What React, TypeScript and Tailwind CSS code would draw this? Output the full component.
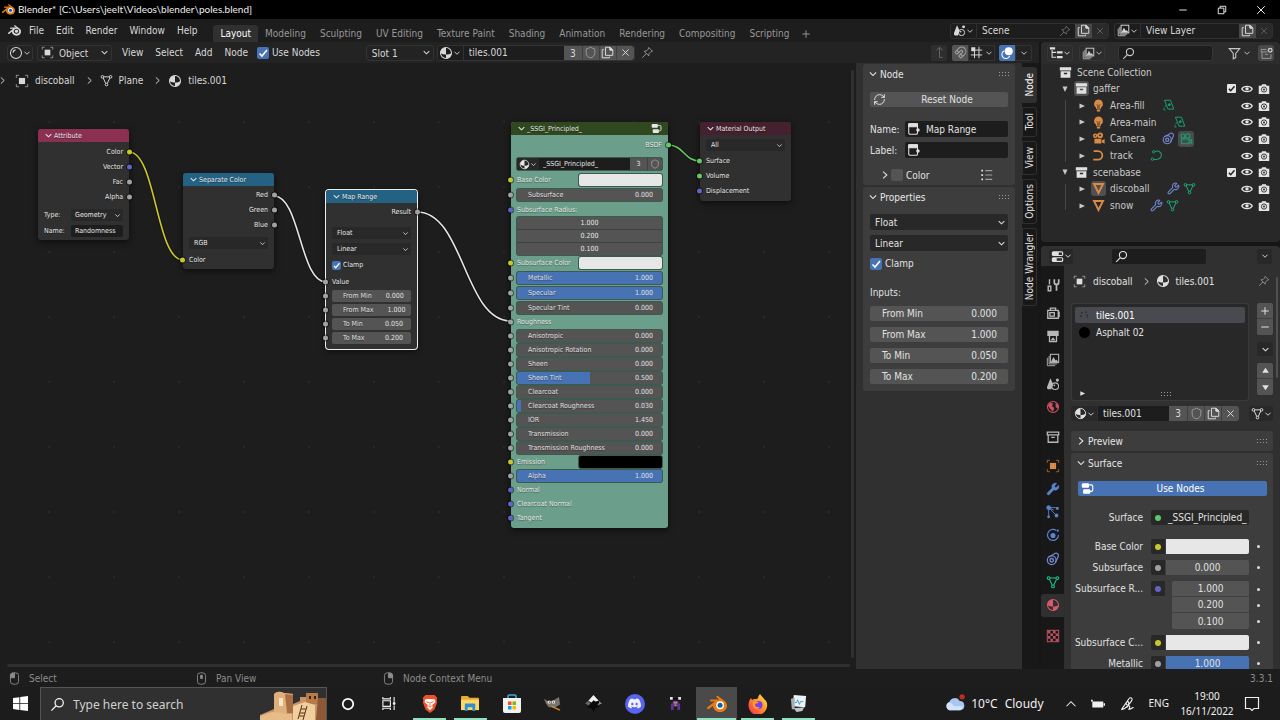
import React from "react";
import { Shield, Wrench, RefreshCw, Magnet } from "lucide-react";
import { SiBlender, SiDiscord } from "react-icons/si";

type Kids = { children?: React.ReactNode; className?: string };

const Icon = ({ children, className = "size-[14px]" }: Kids) => (
  <svg viewBox="0 0 16 16" className={"shrink-0 " + className} fill="none" stroke="currentColor" strokeWidth="1.2" aria-hidden="true">
    {children}
  </svg>
);

const ChevronDown = ({ className = "size-[10px]" }: Kids) => (
  <Icon className={className}><path d="M3 5.5 8 10.5 13 5.5" strokeWidth="1.8" /></Icon>
);
const ChevronRight = ({ className = "size-[11px]" }: Kids) => (
  <Icon className={className}><path d="M5 2.5 11 8 5 13.5" strokeWidth="1.7" /></Icon>
);
const ObjectIcon = ({ className }: Kids) => (
  <Icon className={className}>
    <rect x="4.5" y="4.5" width="7" height="7" fill="currentColor" stroke="none" />
    <path d="M1.5 4.5v-3h3M11.500 1.500h3v3M14.500 11.500v3h-3M4.500 14.500h-3v-3" strokeWidth="1" opacity=".7" />
  </Icon>
);
const MeshIcon = ({ className }: Kids) => (
  <Icon className={className}>
    <path d="M4.500 3.500h7M4 5 7 11.500M12 5 9 11.500" />
    <circle cx="3" cy="3.500" r="1.600" /><circle cx="13" cy="3.500" r="1.600" /><circle cx="8" cy="13" r="1.600" />
  </Icon>
);
const MaterialIcon = ({ className }: Kids) => (
  <Icon className={className}>
    <circle cx="8" cy="8" r="6.300" />
    <path d="M8 1.700A6.300 6.300 0 0 0 1.700 8C3.500 9.300 5.500 9.800 8 9.800ZM8 9.800C10.500 9.800 12.500 9.300 14.300 8A6.300 6.300 0 0 1 8 14.300Z" fill="currentColor" stroke="none" />
  </Icon>
);
const PinIcon = ({ className }: Kids) => (
  <Icon className={className}>
    <path d="M9.500 1.800 14.200 6.500 12.300 7 9.800 9.500 9.600 12.200 3.800 6.400 6.500 6.200 9 3.700ZM6.700 9.300 1.500 14.500" strokeWidth="1.100" />
  </Icon>
);
const CopyIcon = ({ className }: Kids) => (
  <Icon className={className}>
    <path d="M5.500 1.500h5.500l3.500 3.500v6.500h-9ZM11 1.500v3.500h3.500" />
    <path d="M11 1.500 14.500 5H11Z" fill="currentColor" />
    <path d="M3.500 4.500h-2v10h9v-1.500" />
  </Icon>
);
const CloseIcon = ({ className }: Kids) => (
  <Icon className={className}><path d="M3.500 3.500l9 9M12.500 3.500l-9 9" strokeWidth="1.400" /></Icon>
);
const SearchIcon = ({ className }: Kids) => (
  <Icon className={className}><circle cx="9.800" cy="6.200" r="4.400" strokeWidth="1.400" /><path d="M6.600 9.400 1.500 14.500" strokeWidth="1.400" /></Icon>
);
const NodeTreeIcon = ({ className }: Kids) => (
  <Icon className={className}>
    <rect x="1" y="1.500" width="9" height="5.500" rx="1.500" fill="currentColor" stroke="none" />
    <rect x="2.500" y="9" width="9" height="5.500" rx="1.500" fill="currentColor" stroke="none" />
    <path d="M10 3.500h2.500q2 0 2 2v4q0 2-2 2H11" strokeWidth="1.400" />
  </Icon>
);
const NodeIcon = ({ className }: Kids) => (
  <Icon className={className}>
    <rect x="2" y="2" width="10" height="12" rx="1.500" />
    <path d="M2 2h10v3.500H2Z" fill="currentColor" /><circle cx="12.500" cy="9" r="2" fill="currentColor" stroke="none" />
  </Icon>
);
const CollectionIcon = ({ className }: Kids) => (
  <Icon className={className}>
    <path d="M1 1.500h14v4H1Z" fill="currentColor" stroke="none" />
    <path d="M2 6.500h12V14.500H2ZM6 8.300h4v1.900H6Z" fill="currentColor" fillRule="evenodd" stroke="none" />
  </Icon>
);
const CollectionOutline = ({ className }: Kids) => (
  <Icon className={className}><path d="M1.500 2.500h13v3h-13ZM2.500 5.500h11v8.500h-11ZM6 8.500h4" strokeWidth="1.500" /></Icon>
);
const SceneIcon = ({ className }: Kids) => (
  <Icon className={className}>
    <path d="M5 1.500 8.200 8.500 6 14H2.500C1 14 1 12 1.500 10.500Z" fill="currentColor" stroke="none" />
    <circle cx="10.500" cy="10.500" r="3.800" /><circle cx="13" cy="3.500" r="1.800" fill="currentColor" stroke="none" />
    <circle cx="9.500" cy="9.500" r="1" fill="currentColor" stroke="none" />
  </Icon>
);
const LayersIcon = ({ className }: Kids) => (
  <Icon className={className}>
    <rect x="5" y="1.500" width="9.500" height="9.500" />
    <path d="M5.500 10.500 8.500 4.500 11 8.500 12 7.500 14 10.500Z" fill="currentColor" stroke="none" />
    <path d="M3.500 3.500v9h9M1.500 5.500v9h9" strokeWidth="1" />
  </Icon>
);
const FilterIcon = ({ className }: Kids) => (
  <Icon className={className}><path d="M1.500 2h13L9.500 8v5L6.500 14.500V8Z" strokeWidth="1.300" /></Icon>
);
const LightIcon = ({ className }: Kids) => (
  <Icon className={className}>
    <path d="M8 .5a5.500 5.500 0 0 0-3.300 9.800L5.500 12.500h5l.8-2.200A5.500 5.500 0 0 0 8 .5ZM6 13.200h4V15.500H6Z" fill="currentColor" stroke="none" />
    <path d="M6 6.500 7.200 8v4M10 6.500 8.800 8v4" stroke="#282828" strokeWidth=".9" />
  </Icon>
);
const CameraObjIcon = ({ className }: Kids) => (
  <Icon className={className}>
    <circle cx="4" cy="4.500" r="2.800" fill="currentColor" stroke="none" /><circle cx="10" cy="4" r="3.500" fill="currentColor" stroke="none" />
    <circle cx="10" cy="4" r="1.200" fill="#282828" stroke="none" /><circle cx="4" cy="4.500" r=".9" fill="#282828" stroke="none" />
    <path d="M3 8.300h8.500v6H3ZM12.200 10.500l3.300-2v6l-3.300-2Z" fill="currentColor" stroke="none" />
  </Icon>
);
const CameraDataIcon = ({ className }: Kids) => (
  <Icon className={className}>
    <circle cx="4.500" cy="4.500" r="2.300" /><circle cx="10" cy="4.500" r="2.600" />
    <path d="M3 8h8.500v5.500H3ZM11.500 10l3-1.500v4.500l-3-1.500" />
  </Icon>
);
const CurveObjIcon = ({ className }: Kids) => (
  <Icon className={className}><path d="M2 2.500h5.500a5 5 0 0 1 0 10.500H1.500" strokeWidth="2.200" /></Icon>
);
const CurveDataIcon = ({ className }: Kids) => (
  <Icon className={className}>
    <path d="M6 3C10 1.500 14.500 4 14 8s-4 5.500-9.500 4.500" strokeWidth="1.300" /><circle cx="4.500" cy="3.500" r="1.500" /><circle cx="3" cy="12.500" r="1.500" />
  </Icon>
);
const LampDataIcon = ({ className }: Kids) => (
  <Icon className={className}>
    <path d="M3 1.500h7.500l4 11H7.500Z" /><circle cx="9" cy="7" r="1.200" fill="currentColor" /><path d="M4.500 8 1.500 13.500h4" strokeDasharray="2 1.500" />
  </Icon>
);
const MeshObjIcon = ({ className }: Kids) => (
  <Icon className={className}><path d="M2.500 2.500h11L8 13.500Z" strokeWidth="2.400" /></Icon>
);
const ConstraintIcon = ({ className }: Kids) => (
  <Icon className={className}>
    <circle cx="6.500" cy="9.500" r="5" strokeWidth="1.400" /><circle cx="6.500" cy="9.500" r="2" strokeWidth="1.600" /><path d="M3 6 10.500 1.500C13 .8 15 3 14 5L10.500 12.500" strokeWidth="1.400" />
  </Icon>
);
const EyeIcon = ({ className }: Kids) => (
  <Icon className={className}>
    <path d="M1 8C3.500 3.500 12.500 3.500 15 8 12.500 12.500 3.500 12.500 1 8Z" strokeWidth="1.700" /><circle cx="8" cy="7.800" r="2.300" fill="currentColor" stroke="none" />
  </Icon>
);
const RenderIcon = ({ className }: Kids) => (
  <Icon className={className}>
    <path d="M1 3.500h3.500l1-2h5l1 2H15v11H1Z" fill="currentColor" stroke="none" /><circle cx="8" cy="8.700" r="3.500" stroke="#282828" strokeWidth="1.200" /><circle cx="8" cy="8.700" r="1.300" fill="#282828" stroke="none" />
  </Icon>
);
const ToolIcon = ({ className }: Kids) => (
  <Icon className={className}>
    <path d="M4 1.500v6M2.500 9.500h3v5h-3Z" strokeWidth="1.600" /><path d="M12 14.500V8M9.500 1.500v3.500c0 3 5 3 5 0V1.500" strokeWidth="2" />
  </Icon>
);
const CameraBack = ({ className }: Kids) => (
  <Icon className={className}><path d="M2 5h12v9H2ZM5 5V2.500h6V5M4.500 7.500h5v4h-5ZM14 7h1v5h-1" strokeWidth="1.500" /></Icon>
);
const PrinterIcon = ({ className }: Kids) => (
  <Icon className={className}><path d="M1.500 2h13v6h-13Z" fill="currentColor" stroke="none" /><path d="M4 7.500v7h8v-7" strokeWidth="1.500" /><path d="M5 13 8 9.500 11 13Z" fill="currentColor" stroke="none" /></Icon>
);
const WorldIcon = ({ className }: Kids) => (
  <Icon className={className}><circle cx="8" cy="8" r="6.300" strokeWidth="1.300" /><path d="M2 6 5 3 8 4 7 7 9.500 9 8 13.500 4.500 10ZM11 3 14 6 13.500 10 11 8Z" fill="currentColor" stroke="none" /></Icon>
);
const ParticleIcon = ({ className }: Kids) => (
  <Icon className={className}><path d="M3 3V14M3 3h11M3 3l9 9M3 3l6 3" strokeWidth="1" /><circle cx="3" cy="3" r="2" fill="currentColor" /><circle cx="12" cy="12" r="1.600" fill="currentColor" /><circle cx="13" cy="4" r="1" fill="currentColor" /><circle cx="3" cy="13.500" r="1" fill="currentColor" /></Icon>
);
const PhysicsIcon = ({ className }: Kids) => (
  <Icon className={className}><path d="M12 3A6.300 6.300 0 1 0 14.300 8" strokeWidth="1.300" /><circle cx="8" cy="8.500" r="2.900" fill="currentColor" stroke="none" /><circle cx="13.500" cy="3" r="1.200" fill="currentColor" stroke="none" /></Icon>
);
const TextureIcon = ({ className }: Kids) => (
  <Icon className={className}>
    <rect x="1.500" y="1.500" width="13" height="13" />
    <path d="M2 2h3v3H2ZM8 2h3v3H8ZM5 5h3v3H5ZM11 5h3v3h-3ZM2 8h3v3H2ZM8 8h3v3H8ZM5 11h3v3H5ZM11 11h3v3h-3Z" fill="currentColor" stroke="none" />
  </Icon>
);
const PropsIcon = ({ className }: Kids) => (
  <Icon className={className}>
    <rect x="1" y="1.500" width="14" height="6" rx="2" fill="currentColor" stroke="none" /><rect x="1" y="8.800" width="14" height="6" rx="2" fill="currentColor" stroke="none" />
    <path d="M9.500 3h4v3h-4ZM7 10.300h6.500v3H7Z" fill="#282828" stroke="none" />
  </Icon>
);
const TreeIcon = ({ className }: Kids) => (
  <Icon className={className}>
    <path d="M1 1.500h6V4H1ZM9 6h6.500v2.500H9ZM9 11.500h6.500V14H9Z" fill="currentColor" stroke="none" /><path d="M3.500 4.500v8.300H8M3.500 7.300H8" />
  </Icon>
);
const MouseIcon = ({ button }: { button: "left" | "middle" | "right" }) => (
  <Icon className="size-[13px]">
    <rect x="3" y="1" width="10" height="14" rx="3.500" strokeWidth="1.100" />
    {button === "left" && <path d="M3 7V3.500L5 1.500H8V7Z" fill="currentColor" />}
    {button === "right" && <path d="M13 7V3.500L11 1.500H8V7Z" fill="currentColor" />}
    {button === "middle" && <path d="M7 4h2v4H7Z" fill="currentColor" />}
  </Icon>
);
const Grip = () => (
  <svg viewBox="0 0 10 4" className="h-[4px] w-[10px] shrink-0 text-[#9a9a9a]" fill="currentColor" aria-hidden="true">
    {[0, 3, 6, 9].map((x) => <React.Fragment key={x}><rect x={x} y="0" width="1" height="1" /><rect x={x} y="3" width="1" height="1" /></React.Fragment>)}
  </svg>
);

function ColorBlender({ className }: Kids) {
  return (
    <span className={"relative block shrink-0 " + className}>
      <SiBlender className="size-full text-[#ea7c14]" />
      <svg viewBox="0 0 24 24" className="absolute inset-0 size-full" aria-hidden="true">
        <circle cx="15.700" cy="13.400" r="4.800" fill="#fff" /><circle cx="15.700" cy="13.400" r="3" fill="#1d5b96" />
      </svg>
    </span>
  );
}

/* ---------- shared controls ---------- */

function Select({ label, value, className, chevron = "size-[9px]" }: { label: string; value: string; className: string; chevron?: string }) {
  return (
    <span className={"relative flex items-center " + className}>
      <select aria-label={label} defaultValue={value} className="h-full w-full appearance-none bg-transparent outline-none">
        <option>{value}</option>
      </select>
      <ChevronDown className={"pointer-events-none absolute right-[2px] " + chevron} />
    </span>
  );
}

function Check({ label, checked, size = "size-[12px]", gap = "gap-[3px]" }: { label: string; checked?: boolean; size?: string; gap?: string }) {
  return (
    <label className={"flex items-center " + gap}>
      <span className={"relative block shrink-0 " + size}>
        <input type="checkbox" defaultChecked={checked} className="peer block size-full appearance-none rounded-[2px] bg-[#545454] checked:bg-[#4772b3]" />
        <svg viewBox="0 0 12 12" className="pointer-events-none absolute inset-0 hidden size-full peer-checked:block" fill="none" stroke="#fff" strokeWidth="1.600" aria-hidden="true">
          <path d="M2.500 6.500 5 9 10 3" />
        </svg>
      </span>
      {label}
    </label>
  );
}

function NumberField({ label, value, fill = 0, className }: { label: string; value: string; fill?: number; className: string }) {
  return (
    <label className={"relative flex items-center overflow-hidden bg-[#545454] text-[#e0e0e0] " + className}>
      {fill > 0 && <span className="absolute inset-y-0 left-0 bg-[#4772b3]" style={{ width: `${fill * 100}%` }} />}
      <span className="relative flex-1 whitespace-nowrap">{label}</span>
      <input defaultValue={value} className="relative w-[32px] bg-transparent text-right outline-none" />
    </label>
  );
}

function IdButtons({ users }: { users: string }) {
  return (
    <div className="flex h-full items-center divide-x divide-[#404040] rounded-r-[3px] bg-[#545454] text-[#dadada]">
      <button className="h-full w-[19px] text-center">{users}</button>
      <button aria-label="Fake user" className="flex h-full w-[17px] items-center justify-center"><Shield className="size-[13px] text-[#999]" strokeWidth={1.8} /></button>
      <button aria-label="New material" className="flex h-full w-[17px] items-center justify-center"><CopyIcon className="size-[13px]" /></button>
      <button aria-label="Unlink" className="flex h-full w-[17px] items-center justify-center"><CloseIcon className="size-[11px]" /></button>
    </div>
  );
}

/* ---------- window chrome ---------- */

function TitleBar() {
  return (
    <header className="flex h-[19px] shrink-0 items-center bg-black pl-[2px] font-['Lato','Noto_Sans',sans-serif] text-[10px] text-[#eee]">
      <ColorBlender className="size-[13px]" />
      <h1 className="ml-[3px] flex-1">Blender* [C:\Users\jeelt\Videos\blender\poles.blend]</h1>
      <button aria-label="Minimize" className="flex w-[39px] justify-center"><Icon className="size-[10px]"><path d="M2 8h12" strokeWidth="1.500" /></Icon></button>
      <button aria-label="Restore" className="flex w-[39px] justify-center"><Icon className="size-[10px]"><path d="M2 5h9v9H2ZM5 5V2h9v9h-3" strokeWidth="1.500" /></Icon></button>
      <button aria-label="Close" className="flex w-[39px] justify-center"><Icon className="size-[10px]"><path d="M2 2l12 12M14 2 2 14" strokeWidth="1.600" /></Icon></button>
    </header>
  );
}

const workspaces = ["Layout", "Modeling", "Sculpting", "UV Editing", "Texture Paint", "Shading", "Animation", "Rendering", "Compositing", "Scripting"];

function TopBar() {
  return (
    <nav className="flex h-[23px] shrink-0 items-center bg-[#1d1d1d] pr-[7px] text-[#d8d8d8]">
      <SiBlender className="ml-[8px] size-[13px] shrink-0" />
      <div className="ml-[8px] flex gap-[12px]">
        {["File", "Edit", "Render", "Window", "Help"].map((m) => <button key={m}>{m}</button>)}
      </div>
      <div className="ml-[16px] flex items-end self-end">
        {workspaces.map((w, i) => (
          <button key={w} className={i === 0 ? "h-[17px] rounded-t-[3px] bg-[#303030] px-[7px] text-white" : "h-[17px] px-[7px] text-[#989898]"}>{w}</button>
        ))}
        <button aria-label="Add workspace" className="flex h-[17px] items-center px-[5px] text-[#989898]"><Icon className="size-[10px]"><path d="M8 2v12M2 8h12" strokeWidth="1.500" /></Icon></button>
      </div>
      <div className="ml-auto flex h-[16px] gap-[5px]">
        <div className="flex items-center rounded-[3px] border border-[#303030] bg-[#1d1d1d]">
          <button aria-label="Scene list" className="flex w-[26px] items-center justify-center border-r border-[#303030]"><SceneIcon className="size-[13px]" /><ChevronDown className="size-[8px]" /></button>
          <input aria-label="Scene" defaultValue="Scene" className="w-[82px] bg-transparent px-[5px] outline-none" />
          <PinIcon className="mr-[4px] size-[12px] text-[#777]" />
          <button aria-label="New scene" className="flex h-full w-[17px] items-center justify-center bg-[#484848]"><CopyIcon className="size-[13px]" /></button>
          <button aria-label="Delete scene" className="flex h-full w-[16px] items-center justify-center bg-[#2a2a2a] text-[#666]"><CloseIcon className="size-[10px]" /></button>
        </div>
        <div className="flex items-center rounded-[3px] border border-[#303030] bg-[#1d1d1d]">
          <button aria-label="View layer list" className="flex w-[26px] items-center justify-center border-r border-[#303030]"><LayersIcon className="size-[13px]" /><ChevronDown className="size-[8px]" /></button>
          <input aria-label="View layer" defaultValue="View Layer" className="w-[98px] bg-transparent px-[5px] outline-none" />
          <button aria-label="New view layer" className="flex h-full w-[17px] items-center justify-center bg-[#484848]"><CopyIcon className="size-[13px]" /></button>
          <button aria-label="Delete view layer" className="flex h-full w-[16px] items-center justify-center bg-[#2a2a2a] text-[#666]"><CloseIcon className="size-[10px]" /></button>
        </div>
      </div>
    </nav>
  );
}

/* ---------- node editor ---------- */

function EditorHeader() {
  return (
    <div className="flex h-[21px] shrink-0 items-center bg-[#232323] pr-[7px] pl-[7px] text-[#d8d8d8]">
      <button aria-label="Editor type" className="flex h-[16px] w-[26px] items-center justify-center rounded-[3px] border border-[#333]">
        <Icon className="size-[14px]"><circle cx="8" cy="8" r="6.300" /><path d="M4.500 7.500a3.500 3.500 0 0 1 3-3" strokeWidth="1.400" /></Icon>
        <ChevronDown className="size-[8px]" />
      </button>
      <div className="ml-[4px] flex h-[16px] w-[75px] items-center rounded-[3px] border border-[#333] pl-[3px]">
        <ObjectIcon className="size-[13px]" />
        <Select label="Shader type" value="Object" className="ml-[5px] h-full flex-1" />
      </div>
      <div className="ml-[10px] flex gap-[12px]">
        {["View", "Select", "Add", "Node"].map((m) => <button key={m}>{m}</button>)}
      </div>
      <div className="ml-[9px]"><Check label="Use Nodes" checked /></div>
      <Select label="Slot" value="Slot 1" className="ml-[46px] h-[16px] w-[68px] rounded-[3px] border border-[#333] pl-[5px]" />
      <div className="ml-[3px] flex h-[16px] items-center rounded-[3px] border border-[#333] bg-[#1d1d1d]">
        <button aria-label="Browse material" className="flex h-full w-[26px] items-center justify-center border-r border-[#333]"><MaterialIcon className="size-[14px]" /><ChevronDown className="size-[8px]" /></button>
        <input aria-label="Material name" defaultValue="tiles.001" className="w-[100px] bg-transparent px-[5px] outline-none" />
        <IdButtons users="3" />
      </div>
      <button aria-label="Pin" className="ml-[6px] text-[#999]"><PinIcon className="size-[13px]" /></button>
      <div className="ml-auto flex h-[16px] items-center">
        <button aria-label="Parent node tree" className="flex h-full w-[16px] items-center justify-center rounded-[2px] bg-[#2e2e2e] text-[#666]"><Icon className="size-[13px]"><path d="M4 5.500 8 1.500 12 5.500M8 1.500V14h4" /></Icon></button>
        <button aria-label="Snap" className="ml-[5px] flex h-full w-[16px] items-center justify-center rounded-l-[2px] bg-[#545454] text-[#a0a0a0]"><Magnet className="size-[13px]" strokeWidth={2} /></button>
        <button aria-label="Snap element" className="flex h-full w-[27px] items-center justify-center gap-[2px] border border-[#333]"><Icon className="size-[13px]"><path d="M5.500 6v9M11 1v14M1 11h14M6 5h9" /><rect x="1.500" y="1.500" width="5" height="5" fill="currentColor" stroke="none" /></Icon><ChevronDown className="size-[8px]" /></button>
        <button aria-label="Overlays" className="ml-[4px] flex h-full w-[16px] items-center justify-center rounded-l-[2px] bg-[#4772b3] text-white"><Icon className="size-[14px]"><circle cx="10" cy="6" r="4.600" fill="currentColor" stroke="none" /><path d="M5 5.500a4.600 4.600 0 1 0 6 6" /></Icon></button>
        <button aria-label="Overlay options" className="flex h-full w-[17px] items-center justify-center rounded-r-[2px] border border-[#333]"><ChevronDown className="size-[8px]" /></button>
      </div>
    </div>
  );
}

const socketColors = {
  yellow: "bg-[#c7c729]",
  violet: "bg-[#6363c7]",
  gray: "bg-[#a1a1a1]",
  green: "bg-[#63c763]",
};
type Socket = keyof typeof socketColors;

const Dot = ({ color, side }: { color: Socket; side: "left" | "right" }) => (
  <span className={"absolute top-1/2 size-[5px] -translate-y-1/2 rounded-full ring-1 ring-black/50 " + socketColors[color] + (side === "left" ? " -left-[3px]" : " -right-[3px]")} />
);

const Row = ({ side = "left", color, children, className = "h-[15px]" }: Kids & { side?: "left" | "right"; color?: Socket }) => (
  <div className={"relative flex items-center px-[6px] " + (side === "right" ? "justify-end " : "") + className}>
    {color && <Dot color={color} side={side} />}
    {children}
  </div>
);

function Node({ title, header, place, body = "bg-[#303030]", icon, children }: Kids & { title: string; header: string; place: string; body?: string; icon?: React.ReactNode }) {
  return (
    <section className={"absolute rounded-[3px] shadow-[0_2px_6px_rgba(0,0,0,0.600)] [text-shadow:0_1px_1px_rgba(0,0,0,0.400)] " + body + " " + place}>
      <h2 className={"flex h-[13px] items-center rounded-t-[3px] px-[6px] " + header}>
        <ChevronDown className="mr-px size-[9px]" />
        <span className="flex-1">{title}</span>
        {icon}
      </h2>
      {children}
    </section>
  );
}

const nodeSelect = "h-[12px] rounded-[2px] bg-[#282828] px-[5px]";
const nodeField = "h-[12px] w-full rounded-[2px] pr-[8px] pl-[11px]";
const shaderField = "h-[12px] w-full rounded-[2px] pr-[9px] pl-[11px] ring-1 ring-[#3c5a4e]";

type ShaderRow = { name: string; value?: string; fill?: number; swatch?: string; socket: Socket };
const shaderRows: ShaderRow[][] = [
  [
    { name: "Base Color", swatch: "bg-[#e7e7e7]", socket: "yellow" },
    { name: "Subsurface", value: "0.000", socket: "gray" },
    { name: "Subsurface Radius:", socket: "violet" },
  ],
  [
    { name: "Subsurface Color", swatch: "bg-[#e7e7e7]", socket: "yellow" },
    { name: "Metallic", value: "1.000", fill: 1, socket: "gray" },
    { name: "Specular", value: "1.000", fill: 1, socket: "gray" },
    { name: "Specular Tint", value: "0.000", socket: "gray" },
  ],
  [
    { name: "Roughness", socket: "gray" },
    { name: "Anisotropic", value: "0.000", socket: "gray" },
    { name: "Anisotropic Rotation", value: "0.000", socket: "gray" },
    { name: "Sheen", value: "0.000", socket: "gray" },
    { name: "Sheen Tint", value: "0.500", fill: 0.5, socket: "gray" },
    { name: "Clearcoat", value: "0.000", socket: "gray" },
    { name: "Clearcoat Roughness", value: "0.030", fill: 0.03, socket: "gray" },
    { name: "IOR", value: "1.450", socket: "gray" },
    { name: "Transmission", value: "0.000", socket: "gray" },
    { name: "Transmission Roughness", value: "0.000", socket: "gray" },
    { name: "Emission", swatch: "bg-black", socket: "yellow" },
    { name: "Alpha", value: "1.000", fill: 1, socket: "gray" },
    { name: "Normal", socket: "violet" },
    { name: "Clearcoat Normal", socket: "violet" },
    { name: "Tangent", socket: "violet" },
  ],
];

const ShaderRows = ({ rows }: { rows: ShaderRow[] }) => (
  <>
    {rows.map((r) => (
      <Row key={r.name} color={r.socket} className="h-[14px]">
        {r.value ? (
          <NumberField label={r.name} value={r.value} fill={r.fill} className={shaderField} />
        ) : (
          <>
            <span className="flex-1 whitespace-nowrap">{r.name}</span>
            {r.swatch && <button aria-label={r.name} className={"h-[12px] w-[83px] rounded-[2px] ring-1 ring-[#3c5a4e] " + r.swatch} />}
          </>
        )}
      </Row>
    ))}
  </>
);

function Canvas() {
  return (
    <main className="relative min-w-0 flex-1 overflow-hidden bg-[#1d1d1d] text-[7px] leading-[12px] text-[#e6e6e6]">
      <svg className="absolute inset-0 size-full" fill="none" aria-hidden="true">
        <defs>
          <pattern id="grid" x="16" y="26" width="65" height="65" patternUnits="userSpaceOnUse"><rect x="32" y="32" width="2" height="2" fill="#282828" /></pattern>
        </defs>
        <rect width="100%" height="100%" fill="url(#grid)" />
        <g strokeWidth="3.500" stroke="#141414">
          <path d="M129 89C156 89 156 197 183 197M274 133C300 133 300 219 326 219M417 149C464 149 464 258 511 258M668 82C684 82 684 98 700 98" />
        </g>
        <g strokeWidth="1.600">
          <path d="M129 89C156 89 156 197 183 197" stroke="#c7c729" />
          <path d="M274 133C300 133 300 219 326 219" stroke="#e4e4e4" />
          <path d="M417 149C464 149 464 258 511 258" stroke="#e4e4e4" />
          <path d="M668 82C684 82 684 98 700 98" stroke="#63c763" />
        </g>
      </svg>

      <div className="relative flex items-center pt-[10px] text-[10px] leading-[15px] text-[#d8d8d8]">
        <ChevronRight className="-ml-[2px] size-[9px]" />
        <ObjectIcon className="ml-[8px] size-[14px]" /><span className="ml-[6px]">discoball</span>
        <ChevronRight className="mr-[6px] ml-[10px] size-[9px]" />
        <MeshIcon className="size-[13px]" /><span className="ml-[6px]">Plane</span>
        <ChevronRight className="mr-[6px] ml-[10px] size-[9px]" />
        <MaterialIcon className="size-[14px]" /><span className="ml-[6px]">tiles.001</span>
      </div>

      <Node title="Attribute" header="bg-[#8b3051]" place="left-[38px] top-[66px] w-[91px]">
        <div className="pt-[2px] pb-[3px]">
          <Row side="right" color="yellow">Color</Row>
          <Row side="right" color="violet">Vector</Row>
          <Row side="right" color="gray">Fac</Row>
          <Row side="right" color="gray">Alpha</Row>
          <div className="mt-[5px] grid grid-cols-[27px_1fr] gap-y-[4px] px-[6px]">
            <span>Type:</span><Select label="Type" value="Geometry" className="h-[12px] rounded-[2px] bg-[#282828] pl-[4px]" chevron="size-[7px]" />
            <label htmlFor="attr-name">Name:</label><input id="attr-name" defaultValue="Randomness" className="h-[12px] w-full rounded-[2px] bg-[#1d1d1d] pl-[4px] outline-none" />
          </div>
        </div>
      </Node>

      <Node title="Separate Color" header="bg-[#246283]" place="left-[183px] top-[110px] w-[91px]">
        <div className="pt-px pb-[2px]">
          <Row side="right" color="gray">Red</Row>
          <Row side="right" color="gray">Green</Row>
          <Row side="right" color="gray">Blue</Row>
          <Row className="mt-[5px] mb-[3px] h-[12px]"><Select label="Mode" value="RGB" className={nodeSelect + " w-full"} chevron="size-[7px]" /></Row>
          <Row color="yellow">Color</Row>
        </div>
      </Node>

      <Node title="Map Range" header="bg-[#246283]" place="left-[326px] top-[127px] w-[91px] ring-1 ring-[#eee]">
        <div className="pt-px pb-[4px]">
          <Row side="right" color="gray">Result</Row>
          <div className="mt-[8px] mb-[4px] flex flex-col gap-[4px] px-[6px]">
            <Select label="Data type" value="Float" className={nodeSelect} chevron="size-[7px]" />
            <Select label="Interpolation" value="Linear" className={nodeSelect} chevron="size-[7px]" />
            <Check label="Clamp" checked size="size-[9px]" gap="gap-[2px]" />
          </div>
          <Row color="gray" className="h-[14px]">Value</Row>
          {[["From Min", "0.000"], ["From Max", "1.000"], ["To Min", "0.050"], ["To Max", "0.200"]].map(([n, v]) => (
            <Row key={n} color="gray" className="h-[14px]"><NumberField label={n} value={v} className={nodeField} /></Row>
          ))}
        </div>
      </Node>

      <Node title="_SSGI_Principled_" header="bg-[#30481f]" body="bg-[#6c9f8b]" place="left-[511px] top-[59px] w-[157px]" icon={<NodeTreeIcon className="size-[11px]" />}>
        <div className="pt-[2px] pb-[3px]">
          <Row side="right" color="green">BSDF</Row>
          <div className="mx-[6px] mt-[6px] mb-[3px] flex h-[12px] items-center rounded-[2px] bg-[#1d1d1d] ring-1 ring-[#3c5a4e]">
            <button aria-label="Browse group" className="flex h-full w-[22px] items-center justify-center rounded-l-[2px] bg-[#282828]"><MaterialIcon className="size-[11px]" /><ChevronDown className="size-[7px]" /></button>
            <input aria-label="Group name" defaultValue="_SSGI_Principled_" className="min-w-0 flex-1 bg-transparent pl-[4px] outline-none" />
            <button className="h-full w-[18px] border-r border-[#404040] bg-[#545454]">3</button>
            <button aria-label="Fake user" className="flex h-full w-[14px] items-center justify-center rounded-r-[2px] bg-[#545454]"><Shield className="size-[10px] text-[#a0a0a0]" strokeWidth={2} /></button>
          </div>
          <div className="flex flex-col gap-[1px]"><ShaderRows rows={shaderRows[0]} /></div>
          <div className="mx-[6px] flex h-[38px] flex-col divide-y divide-[#404040] rounded-[2px] bg-[#545454] ring-1 ring-[#3c5a4e]">
            {["1.000", "0.200", "0.100"].map((v) => <input key={v} aria-label="Subsurface Radius" defaultValue={v} className="min-h-0 w-full flex-1 bg-transparent text-center outline-none" />)}
          </div>
          <div className="mt-[1px] flex flex-col gap-[1px]"><ShaderRows rows={shaderRows[1]} /></div>
          <ShaderRows rows={shaderRows[2]} />
        </div>
      </Node>

      <Node title="Material Output" header="bg-[#45202e]" place="left-[700px] top-[59px] w-[91px]">
        <div className="pt-[4px] pb-[3px]">
          <Row className="mb-[2px] h-[12px]"><Select label="Target" value="All" className={nodeSelect + " w-full"} chevron="size-[7px]" /></Row>
          <Row color="green">Surface</Row>
          <Row color="green">Volume</Row>
          <Row color="violet">Displacement</Row>
        </div>
      </Node>

      <div className="absolute top-[7px] right-[2px] bottom-[11px] w-[3px] rounded-full bg-[#303030]" />
      <div className="absolute right-[6px] bottom-[2px] left-[7px] h-[3px] rounded-full bg-[#303030]" />
    </main>
  );
}

function PanelHead({ title, open = true }: { title: string; open?: boolean }) {
  return (
    <h3 className="flex h-[20px] items-center pr-[6px] pl-[5px] text-[#e6e6e6]">
      {open ? <ChevronDown className="size-[10px]" /> : <ChevronRight className="size-[10px]" />}
      <span className="ml-[2px] flex-1">{title}</span>
      <Grip />
    </h3>
  );
}

const panelField = "h-[15px] rounded-[2px] pr-[11px] pl-[12px]";
const panelSelect = "h-[16px] rounded-[2px] bg-[#282828] pl-[5px]";

function Sidebar() {
  return (
    <aside className="flex shrink-0 bg-[#181818] text-[#e0e0e0]">
      <div className="flex w-[166px] flex-col gap-[2px] bg-[#303030] px-[7px] pt-[1px]">
        <section className="rounded-[3px] bg-[#3d3d3d] pb-px">
          <PanelHead title="Node" />
          <div className="flex flex-col px-[7px] pt-[8px]">
            <button className="flex h-[15px] items-center rounded-[2px] bg-[#545454] pl-[3px]"><RefreshCw className="size-[13px]" strokeWidth={1.800} /><span className="flex-1 text-center">Reset Node</span></button>
            <div className="mt-[14px] grid grid-cols-[35px_1fr] items-center gap-y-[5px]">
              <label htmlFor="node-name">Name:</label>
              <div className="flex h-[16px] items-center rounded-[2px] bg-[#1d1d1d] pl-[2px]"><NodeIcon className="size-[14px]" /><input id="node-name" defaultValue="Map Range" className="w-full min-w-0 bg-transparent pl-[5px] outline-none" /></div>
              <label htmlFor="node-label">Label:</label>
              <div className="flex h-[16px] items-center rounded-[2px] bg-[#1d1d1d] pl-[2px]"><NodeIcon className="size-[14px]" /><input id="node-label" className="w-full min-w-0 bg-transparent pl-[5px] outline-none" /></div>
            </div>
            <div className="mt-[8px] flex h-[18px] items-center pr-[14px] pl-[10px]">
              <ChevronRight className="size-[10px]" />
              <span className="ml-px flex-1"><Check label="Color" /></span>
              <Icon className="size-[14px]"><path d="M6 3h8M6 8h8M6 13h8" opacity=".6" /><path d="M1.500 2h2v2h-2ZM1.500 7h2v2h-2ZM1.500 12h2v2h-2Z" fill="currentColor" stroke="none" /></Icon>
            </div>
          </div>
        </section>
        <section className="rounded-[3px] bg-[#3d3d3d] pb-[7px]">
          <PanelHead title="Properties" />
          <div className="flex flex-col gap-[5px] px-[7px] pt-[7px]">
            <Select label="Data type" value="Float" className={panelSelect} />
            <Select label="Interpolation" value="Linear" className={panelSelect} />
            <Check label="Clamp" checked />
          </div>
          <div className="flex flex-col gap-[6px] px-[7px] pt-[15px]">
            <span className="leading-[14px]">Inputs:</span>
            {[["From Min", "0.000"], ["From Max", "1.000"], ["To Min", "0.050"], ["To Max", "0.200"]].map(([n, v]) => (
              <NumberField key={n} label={n} value={v} className={panelField} />
            ))}
          </div>
        </section>
      </div>
      <div className="flex w-[17px] flex-col gap-[4px] pt-[4px]">
        {[["Node", "h-[36px] bg-[#303030] text-white"], ["Tool", "h-[30px] border border-[#303030]"], ["View", "h-[34px] border border-[#303030]"], ["Options", "h-[45px] border border-[#303030]"], ["Node Wrangler", "h-[78px] border border-[#303030]"]].map(([t, c]) => (
          <button key={t} className={"flex w-[15px] items-center justify-center rounded-r-[3px] " + c}><span className="rotate-180 whitespace-nowrap [writing-mode:vertical-rl]">{t}</span></button>
        ))}
      </div>
    </aside>
  );
}

/* ---------- outliner ---------- */

type TreeRow = { name: string; icon: React.ReactNode; depth: 0 | 1 | 2; open?: boolean; active?: boolean; data?: React.ReactNode };
const modifierData = <><Wrench className="size-[13px] text-[#6f87d0]" strokeWidth={2} /><MeshIcon className="size-[13px] text-[#19b07f]" /></>;
const tree: TreeRow[] = [
  { name: "Scene Collection", depth: 0, icon: <CollectionIcon className="size-[13px] text-[#e0e0e0]" /> },
  { name: "gaffer", depth: 1, open: true, active: true, icon: <CollectionIcon className="size-[13px] text-[#e0e0e0]" /> },
  { name: "Area-fill", depth: 2, icon: <LightIcon className="size-[13px]" />, data: <LampDataIcon className="size-[13px] text-[#19a077]" /> },
  { name: "Area-main", depth: 2, icon: <LightIcon className="size-[13px]" />, data: <LampDataIcon className="size-[13px] text-[#19a077]" /> },
  { name: "Camera", depth: 2, icon: <CameraObjIcon className="size-[13px]" />, data: <><ConstraintIcon className="size-[13px] text-[#6f87d0]" /><span className="rounded-[3px] bg-[#4a4a4a] p-[1px]"><CameraDataIcon className="size-[14px] text-[#19a077]" /></span></> },
  { name: "track", depth: 2, icon: <CurveObjIcon className="size-[13px]" />, data: <CurveDataIcon className="size-[13px] text-[#19a077]" /> },
  { name: "scenabase", depth: 1, open: true, icon: <CollectionIcon className="size-[13px] text-[#e0e0e0]" /> },
  { name: "discoball", depth: 2, active: true, icon: <MeshObjIcon className="size-[13px]" />, data: modifierData },
  { name: "snow", depth: 2, icon: <MeshObjIcon className="size-[13px]" />, data: modifierData },
];
const indents = ["pl-[17px]", "pl-[20px]", "pl-[37px]"];

function Outliner() {
  return (
    <section className="h-[200px] shrink-0 rounded-[4px] bg-[#282828] text-[#c8c8c8]">
      <div className="flex h-[22px] items-center rounded-t-[4px] bg-[#2c2c2c] px-[6px]">
        <button aria-label="Editor type" className="flex h-[16px] w-[26px] items-center justify-center rounded-[3px] border border-[#363636] text-[#e0e0e0]"><TreeIcon className="size-[14px]" /><ChevronDown className="size-[8px]" /></button>
        <button aria-label="Display mode" className="ml-[6px] flex h-[16px] w-[26px] items-center justify-center rounded-[3px] border border-[#363636]"><LayersIcon className="size-[13px]" /><ChevronDown className="size-[8px]" /></button>
        <label className="mx-auto flex h-[16px] w-[95px] items-center rounded-[3px] border border-[#363636] bg-[#1d1d1d] pl-[3px]"><SearchIcon className="size-[13px]" /><input aria-label="Filter" className="w-full min-w-0 bg-transparent outline-none" /></label>
        <button aria-label="Filter options" className="flex h-[16px] w-[26px] items-center justify-center gap-[2px] rounded-[3px]"><FilterIcon className="size-[13px]" /><ChevronDown className="size-[8px]" /></button>
        <button aria-label="New collection" className="ml-[6px] flex h-[16px] w-[16px] items-center justify-center rounded-[3px] bg-[#484848] text-[#999]"><Icon className="size-[13px]"><path d="M8 3H1.500v3H9M2.500 6v8h11V9M6 9h4" /><circle cx="12.500" cy="4" r="3" fill="#ccc" stroke="none" /><path d="M12.500 2.500v3M11 4h3" stroke="#333" /></Icon></button>
      </div>
      <ul className="relative grid h-[150px] grid-rows-9">
        <li aria-hidden="true" className="absolute top-[36px] left-[24px] h-[62px] w-px bg-[#484848]" />
        <li aria-hidden="true" className="absolute top-[120px] left-[24px] h-[26px] w-px bg-[#484848]" />
        {tree.map((r) => (
          <li key={r.name} className={"flex items-center pr-[10px] " + indents[r.depth]}>
            {r.depth > 0 && (
              <button aria-label={"Expand " + r.name} className="mr-[5px]">
                <Icon className="size-[8px]">{r.open ? <path d="M3 3h10L8 14Z" fill="currentColor" stroke="none" /> : <path d="M3 3v10L14 8Z" fill="currentColor" stroke="none" />}</Icon>
              </button>
            )}
            <span className={"rounded-[3px] p-[1px] " + (r.depth === 2 ? "text-[#d98a45] " : "") + (r.active ? "bg-[#505050]" : "")}>{r.icon}</span>
            <span className="ml-[4px]">{r.name}</span>
            <span className="ml-[17px] flex items-center gap-[3px]">{r.data}</span>
            {r.depth > 0 && (
              <span className="ml-auto flex items-center gap-[5px] text-[#e6e6e6]">
                {r.depth === 1 && (
                  <span className="relative block size-[9px]">
                    <input type="checkbox" aria-label={"Enable " + r.name} defaultChecked className="block size-full appearance-none rounded-[1px] bg-[#e6e6e6]" />
                    <svg viewBox="0 0 12 12" className="pointer-events-none absolute inset-0 size-full" fill="none" stroke="#222" strokeWidth="2" aria-hidden="true"><path d="M2.500 6.500 5 9 10 3" /></svg>
                  </span>
                )}
                <button aria-label={"Hide " + r.name}><EyeIcon className="size-[12px]" /></button>
                <button aria-label={"Render " + r.name}><RenderIcon className="size-[12px]" /></button>
              </span>
            )}
          </li>
        ))}
      </ul>
    </section>
  );
}

/* ---------- properties ---------- */

const navIcon = "size-[14px]";
function PropertiesNav() {
  return (
    <nav className="flex w-[23px] shrink-0 flex-col items-center bg-[#181818] pt-[8px] text-[#b8b8b8] [&_button]:flex [&_button]:items-center [&_button]:justify-center">
      <button aria-label="Tool" className="h-[22px] w-full"><ToolIcon className={navIcon} /></button>
      <div className="mt-[5px] grid h-[118px] w-full shrink-0 grid-rows-5">
        <button aria-label="Render"><CameraBack className={navIcon} /></button>
        <button aria-label="Output"><PrinterIcon className={navIcon} /></button>
        <button aria-label="View Layer"><LayersIcon className={navIcon} /></button>
        <button aria-label="Scene"><SceneIcon className={navIcon} /></button>
        <button aria-label="World" className="text-[#c8505f]"><WorldIcon className={navIcon} /></button>
      </div>
      <button aria-label="Collection" className="mt-[6px] h-[24px] w-full shrink-0"><CollectionOutline className={navIcon} /></button>
      <div className="mt-[5px] grid h-[163px] w-full shrink-0 grid-rows-7">
        <button aria-label="Object" className="text-[#d98a45]"><ObjectIcon className={navIcon} /></button>
        <button aria-label="Modifiers" className="text-[#5b84cf]"><Wrench className={navIcon} fill="currentColor" strokeWidth={1} /></button>
        <button aria-label="Particles" className="text-[#5b84cf]"><ParticleIcon className={navIcon} /></button>
        <button aria-label="Physics" className="text-[#5b84cf]"><PhysicsIcon className={navIcon} /></button>
        <button aria-label="Constraints" className="text-[#6f87d0]"><ConstraintIcon className={navIcon} /></button>
        <button aria-label="Data" className="text-[#19c88a]"><MeshIcon className={navIcon} /></button>
        <button aria-label="Material" className="rounded-l-[3px] bg-[#303030] text-[#d8596c]"><MaterialIcon className={navIcon} /></button>
      </div>
      <button aria-label="Texture" className="mt-[7px] h-[23px] w-full shrink-0 text-[#b5505e]"><TextureIcon className={navIcon} /></button>
    </nav>
  );
}

const PropDot = ({ color }: { color: Socket }) => (
  <span className="mr-px flex h-[15px] w-[14px] shrink-0 items-center justify-center rounded-l-[2px] bg-[#282828]"><span className={"size-[6px] rounded-full " + socketColors[color]} /></span>
);
const PropRow = ({ label, color, children, anim = true }: Kids & { label: string; color: Socket; anim?: boolean }) => (
  <div className="flex items-center">
    <span className="mr-[8px] w-[69px] text-right whitespace-nowrap">{label}</span>
    <PropDot color={color} />
    {children}
    <span className="flex w-[18px] shrink-0 justify-center">{anim && <span className="size-[3px] rounded-full bg-[#ddd]" />}</span>
  </div>
);

function Properties() {
  const valueInput = "h-[15px] min-w-0 flex-1 rounded-r-[2px] text-center outline-none";
  return (
    <section className="flex min-h-0 flex-1 flex-col overflow-hidden rounded-t-[4px] bg-[#303030] text-[#e0e0e0]">
      <div className="flex h-[20px] shrink-0 items-center px-[8px]">
        <button aria-label="Editor type" className="flex h-[15px] w-[24px] items-center justify-center rounded-[2px] bg-[#282828]"><PropsIcon className="size-[13px]" /><ChevronDown className="size-[8px]" /></button>
        <label className="mr-auto ml-[39px] flex h-[15px] w-[94px] items-center rounded-[2px] bg-[#1d1d1d] pl-[3px]"><SearchIcon className="size-[13px]" /><input aria-label="Search properties" className="w-full min-w-0 bg-transparent outline-none" /></label>
        <button aria-label="Options" className="flex h-[15px] w-[15px] items-center justify-center rounded-[2px] bg-[#282828]"><ChevronDown className="size-[8px]" /></button>
      </div>
      <div className="flex min-h-0 flex-1">
        <PropertiesNav />
        <div className="relative min-w-0 flex-1 overflow-hidden pr-[7px] pl-[7px]">
          <div className="flex h-[30px] items-center">
            <ObjectIcon className="ml-[2px] size-[13px]" /><span className="ml-[7px]">discoball</span>
            <ChevronRight className="mr-[5px] ml-[9px] size-[9px]" />
            <MaterialIcon className="size-[14px]" /><span className="ml-[6px]">tiles.001</span>
            <PinIcon className="mr-[3px] ml-auto size-[12px] text-[#999]" />
          </div>
          <div className="mt-[7px] flex gap-[8px]">
            <div className="flex h-[98px] flex-1 flex-col rounded-[3px] border border-[#3a3a3a] bg-[#282828] p-[3px]">
              <button className="flex h-[16px] items-center rounded-[2px] bg-[#484a50] pl-[4px] text-white"><Icon className="size-[11px]"><path d="M3 4h3M9 3h3M12 7v4M3 8v3" stroke="#222" strokeWidth="2" strokeDasharray="2 1" /></Icon><span className="ml-[6px]">tiles.001</span></button>
              <button className="mt-[1px] flex h-[16px] items-center pl-[4px]"><span className="size-[11px] rounded-full bg-black" /><span className="ml-[6px]">Asphalt 02</span></button>
              <div className="mt-auto flex items-center pl-[4px]"><Icon className="size-[7px]"><path d="M3 3v10L14 8Z" fill="currentColor" stroke="none" /></Icon><span className="mx-auto"><Grip /></span></div>
            </div>
            <div className="flex w-[16px] flex-col gap-[7px]">
              <div className="divide-y divide-[#404040] rounded-[2px] bg-[#545454]">
                <button aria-label="Add slot" className="flex h-[16px] w-full items-center justify-center"><Icon className="size-[10px]"><path d="M8 2v12M2 8h12" strokeWidth="1.600" /></Icon></button>
                <button aria-label="Remove slot" className="flex h-[16px] w-full items-center justify-center"><Icon className="size-[10px]"><path d="M2 8h12" strokeWidth="1.600" /></Icon></button>
              </div>
              <button aria-label="Slot options" className="flex h-[14px] items-center justify-center rounded-[2px] bg-[#282828]"><ChevronDown className="size-[9px]" /></button>
              <div className="divide-y divide-[#404040] rounded-[2px] bg-[#545454]">
                <button aria-label="Move up" className="flex h-[16px] w-full items-center justify-center"><Icon className="size-[9px]"><path d="M2 12h12L8 3Z" fill="currentColor" stroke="none" /></Icon></button>
                <button aria-label="Move down" className="flex h-[16px] w-full items-center justify-center"><Icon className="size-[9px]"><path d="M2 4h12L8 13Z" fill="currentColor" stroke="none" /></Icon></button>
              </div>
            </div>
          </div>
          <div className="mt-[5px] flex h-[15px] items-center">
            <button aria-label="Browse material" className="flex h-full w-[26px] items-center justify-center rounded-l-[2px] bg-[#282828]"><MaterialIcon className="size-[13px]" /><ChevronDown className="size-[8px]" /></button>
            <input aria-label="Material name" defaultValue="tiles.001" className="ml-px h-full w-[71px] bg-[#1d1d1d] pl-[5px] outline-none" />
            <IdButtons users="3" />
            <button aria-label="Material slot link" className="ml-auto flex h-full w-[24px] items-center justify-center rounded-[2px] bg-[#282828]"><MeshIcon className="size-[13px]" /><ChevronDown className="size-[8px]" /></button>
          </div>
          <div className="mt-[10px] rounded-[3px] bg-[#3d3d3d]"><PanelHead title="Preview" open={false} /></div>
          <section className="mt-[2px] rounded-t-[3px] bg-[#3d3d3d]">
            <PanelHead title="Surface" />
            <div className="pr-[6px] pl-[3px]">
              <div className="pt-[8px] pl-[4px]">
                <button className="flex h-[15px] w-full items-center rounded-[2px] bg-[#4772b3] pl-[3px] text-white"><NodeTreeIcon className="size-[13px]" /><span className="flex-1 text-center">Use Nodes</span></button>
              </div>
              <div className="mt-[14px] mb-[14px]">
                <PropRow label="Surface" color="green" anim={false}><button className="-ml-px h-[15px] flex-1 rounded-r-[2px] bg-[#282828] pl-[3px] text-left whitespace-nowrap">_SSGI_Principled_</button></PropRow>
              </div>
              <div className="flex flex-col gap-[6px]">
                <PropRow label="Base Color" color="yellow"><button aria-label="Base Color" className="h-[15px] flex-1 rounded-r-[2px] bg-[#e7e7e7]" /></PropRow>
                <PropRow label="Subsurface" color="gray"><input aria-label="Subsurface" defaultValue="0.000" className={valueInput + " bg-[#545454]"} /></PropRow>
                <div className="flex items-start">
                  <span className="mr-[8px] w-[69px] text-right whitespace-nowrap">Subsurface R...</span>
                  <PropDot color="violet" />
                  <div className="ml-[6px] flex min-w-0 flex-1 flex-col divide-y divide-[#404040] rounded-[2px] bg-[#545454]">
                    {["1.000", "0.200", "0.100"].map((v) => <input key={v} aria-label="Subsurface Radius" defaultValue={v} className="h-[16px] w-full bg-transparent text-center outline-none" />)}
                  </div>
                  <div className="flex h-[48px] w-[18px] flex-col items-center justify-around">{[0, 1, 2].map((i) => <span key={i} className="size-[3px] rounded-full bg-[#ddd]" />)}</div>
                </div>
                <PropRow label="Subsurface C..." color="yellow"><button aria-label="Subsurface Color" className="h-[15px] flex-1 rounded-r-[2px] bg-[#e7e7e7]" /></PropRow>
                <PropRow label="Metallic" color="gray"><input aria-label="Metallic" defaultValue="1.000" className={valueInput + " bg-[#4772b3]"} /></PropRow>
              </div>
            </div>
          </section>
          <div className="absolute top-[11px] right-[2px] h-[101px] w-[2px] rounded-full bg-[#505050]" />
        </div>
      </div>
    </section>
  );
}

/* ---------- bottom bars ---------- */

function StatusBar() {
  return (
    <footer className="flex h-[18px] shrink-0 items-center bg-[#1d1d1d] pr-[7px] pl-[8px] text-[#8c8c8c]">
      <span className="flex w-[187px] items-center gap-[8px]"><MouseIcon button="left" />Select</span>
      <span className="flex w-[187px] items-center gap-[8px]"><MouseIcon button="middle" />Pan View</span>
      <span className="flex items-center gap-[8px]"><MouseIcon button="right" />Node Context Menu</span>
      <span className="ml-auto">3.3.1</span>
    </footer>
  );
}

function SearchArt() {
  return (
    <svg viewBox="0 0 66 32" className="h-full w-[66px] shrink-0" aria-hidden="true">
      <path d="M0 32V27L14 21V6Q18 2 24 5L33 6V16L40 13V9H46V5H58V12H66V32Z" fill="#c99363" />
      <path d="M14 6Q18 2 24 5L33 6V25H14Z" fill="#e0b07c" /><path d="M25 6 33 7V25H27Z" fill="#a96e44" />
      <path d="M46 5h12v11H46Z" fill="#b97a4a" /><path d="M58 10h8v22H56Z" fill="#8d5835" /><path d="M33 18l12-4 10 3v15H33Z" fill="#f0cf9f" /><path d="M0 28l12-4 20 2v6H0Z" fill="#e6bd8a" />
      <path d="M19 10h4v8h-4Z" fill="#f8e6be" /><path d="M49 8h2v3h-2ZM54 8h2v3h-2Z" fill="#3d2415" />
      <path d="M38 31 42 17M43 32 47 18M39 28h5M40 25h5M41 21h5" stroke="#5d3018" strokeWidth="1" />
    </svg>
  );
}

const TaskButton = ({ label, children, open, active }: Kids & { label: string; open?: boolean; active?: boolean }) => (
  <button aria-label={label} className={"relative flex h-full w-[41px] items-center justify-center border-x border-transparent " + (active ? "bg-[#4a4a4a]" : "")}>
    {children}
    {open && <span className={"absolute bottom-0 h-[2px] bg-[#8fe0bd] " + (active ? "inset-x-0" : "inset-x-[3px]")} />}
  </button>
);

function Taskbar() {
  return (
    <footer className="flex h-[33px] shrink-0 items-center bg-[#1c1c1c] font-['Noto_Sans',sans-serif] text-[12px] text-[#f0f0f0]">
      <button aria-label="Start" className="flex w-[40px] justify-center"><svg viewBox="0 0 16 16" className="size-[15px]" fill="#fff" aria-hidden="true"><path d="M0 2.200 6.800 1.300V7.600H0ZM7.700 1.100 16 0V7.600H7.700ZM0 8.500H6.800V14.800L0 13.800ZM7.700 8.500H16V16L7.700 15Z" /></svg></button>
      <label className="flex h-full w-[287px] items-center border border-b-0 border-[#555] bg-[#303030] pl-[9px]">
        <SearchIcon className="size-[15px]" />
        <input aria-label="Search" placeholder="Type here to search" className="ml-[8px] w-full min-w-0 bg-transparent outline-none placeholder:text-[#d0d0d0]" />
        <SearchArt />
      </label>
      <div className="flex h-full">
        <TaskButton label="Cortana"><svg viewBox="0 0 16 16" className="size-[14px]" fill="none" stroke="#fff" strokeWidth="2" aria-hidden="true"><circle cx="8" cy="8" r="6" /></svg></TaskButton>
        <TaskButton label="Task view"><Icon className="size-[15px]"><path d="M2 1v2h8V1M2 5h8v6H2ZM2 15v-2h8v2M14 1v5M14 10v5" /><circle cx="14" cy="8" r=".9" fill="currentColor" /></Icon></TaskButton>
        <TaskButton label="Brave" open><svg viewBox="0 0 20 22" className="h-[20px] w-[18px]" aria-hidden="true"><path d="M5 1h10l3 3-.5 3 .5 2-3 8-5 4-5-4-3-8 .5-2L2 4Z" fill="#f0502a" /><path d="M4.500 6 8 5.500h4L15.500 6 16 9l-3.500 3 .5 3-3 3-3-3 .5-3L4 9Z" fill="#fff" /><path d="M6 8.500 9 9.500M14 8.500 11 9.500M10 9v4M8 13l2 1.500 2-1.500" stroke="#f0502a" fill="none" /></svg></TaskButton>
        <TaskButton label="File Explorer" open><svg viewBox="0 0 20 18" className="h-[17px] w-[19px]" aria-hidden="true"><path d="M0 2q0-1 1-1h6l2 2h9q1 0 1 1v12H0Z" fill="#e8ab2e" /><path d="M0 5h19v11H0Z" fill="#fbd768" /><path d="M4 17V10q0-1 1-1h9q1 0 1 1v7h-3v-4H7v4Z" fill="#2f8fd3" /></svg></TaskButton>
        <TaskButton label="Microsoft Store"><svg viewBox="0 0 20 20" className="size-[20px]" aria-hidden="true"><path d="M6 5V2q0-1 1-1h6q1 0 1 1v3" fill="none" stroke="#38a8e0" strokeWidth="1.500" /><path d="M1 4h18v13q0 2-2 2H3q-2 0-2-2Z" fill="#f2f2f2" /><path d="M6 7.500h3.500V11H6Z" fill="#f25022" /><path d="M10.500 7.500H14V11h-3.500Z" fill="#7fba00" /><path d="M6 12h3.500v3.500H6Z" fill="#00a4ef" /><path d="M10.500 12H14v3.500h-3.500Z" fill="#ffb900" /></svg></TaskButton>
        <TaskButton label="GIMP"><svg viewBox="0 0 20 16" className="h-[15px] w-[19px]" aria-hidden="true"><path d="M1 3 6 6 12 4 17 1 18 9 13 12 6 12 3 8Z" fill="#7a756c" /><circle cx="6.500" cy="6.500" r="1.800" fill="#eee" /><circle cx="11" cy="6.500" r="1.800" fill="#eee" /><circle cx="6.800" cy="6.500" r=".7" fill="#111" /><circle cx="11" cy="6.500" r=".7" fill="#111" /><path d="M9 11 18 15" stroke="#d08a3a" strokeWidth="1.500" /></svg></TaskButton>
        <TaskButton label="Inkscape"><svg viewBox="0 0 20 20" className="size-[19px]" aria-hidden="true"><path d="M10 1 19 10 15 12 16 14 12 15 10 19 8 15 3 14 5 12 1 10Z" fill="#0a0a0a" /><path d="M10 1 15.500 7 12 8 10 6.500 8 9 4.500 7Z" fill="#f2f2f2" /><path d="M15.500 7 19 10 14 12 16 9Z" fill="#8a8a8a" /><path d="M4.500 7 1 10 5 12 7 10Z" fill="#666" /></svg></TaskButton>
        <TaskButton label="Discord"><span className="flex size-[20px] items-center justify-center rounded-full bg-[#5865f2]"><SiDiscord className="size-[13px]" /></span></TaskButton>
        <TaskButton label="Minecraft launcher"><svg viewBox="0 0 12 16" className="h-[15px] w-[11px]" aria-hidden="true"><path d="M0 2h12v3H0Z" fill="#15101c" /><path d="M0 1h3v3H0ZM9 1h3v3H9Z" fill="#e8e0f0" /><path d="M3 5h6v3h2v7H8v-4H4v4H1V8h2Z" fill="#5c3590" /><path d="M4 6h4v2H4ZM5 9h2v2H5Z" fill="#cf8f66" /></svg></TaskButton>
        <TaskButton label="Blender" open active><ColorBlender className="size-[20px]" /></TaskButton>
        <TaskButton label="Firefox" open>
          <svg viewBox="0 0 20 20" className="size-[20px]" aria-hidden="true">
            <defs><linearGradient id="fox" x1="1" y1="0" x2="0" y2="1"><stop offset="0" stopColor="#fff04a" /><stop offset=".45" stopColor="#ff9527" /><stop offset="1" stopColor="#f5225c" /></linearGradient></defs>
            <path d="M12 0c1 2 3 3 4 5 3 2 3.500 5 3 8a9.300 9.300 0 0 1-18.500-1C.500 9 1 6 3 4l1 2 2-1c1 0 4 0 4-1 0-1 1-3 2-4Z" fill="url(#fox)" /><circle cx="10.500" cy="11" r="4" fill="#7a3cf0" /><path d="M5 8q4-2 6 1-4 0-4 2 1 3 5 2-3 4-6 1-2-3-1-6Z" fill="#ff9a2a" />
          </svg>
        </TaskButton>
        <TaskButton label="System monitor" open><svg viewBox="0 0 20 20" className="size-[19px]" aria-hidden="true"><path d="M5 1 18 2 17 14 4 13Z" fill="#eef2f5" /><path d="M2 5 6 4 6 16 3 16Z" fill="#a8adb0" /><path d="M5 15 16 14 14 18 8 19Z" fill="#bfc4c7" /><path d="M6 9h2l1-3 2 5 1-3h3" stroke="#3f9ad0" fill="none" /></svg></TaskButton>
      </div>
      <button className="ml-auto flex items-center gap-[5px] whitespace-nowrap">
        <svg viewBox="0 0 22 20" className="h-[19px] w-[22px]" aria-hidden="true"><path d="M5 17a4.500 4.500 0 0 1 0-8.500 6 6 0 0 1 11-1A4.800 4.800 0 0 1 17 17Z" fill="#a9c6f0" /><path d="M5 17a4.500 4.500 0 0 1-1-8c3 0 5 2 6 4h9q-.5 4-3 4Z" fill="#d4e3fa" /><circle cx="18.500" cy="3" r="2.800" fill="#c42b1c" /></svg>
        <span>10°C</span><span className="ml-[2px]">Cloudy</span>
      </button>
      <div className="ml-[21px] flex items-center">
        <button aria-label="Hidden icons" className="flex w-[12px] justify-center"><Icon className="size-[12px]"><path d="M2 11 8 5 14 11" strokeWidth="1.400" /></Icon></button>
        <svg viewBox="0 0 16 16" className="ml-[14px] size-[14px]" fill="#f0f0f0" aria-label="Battery"><path d="M3 5h11v7H3ZM14.500 7H16v3h-1.500ZM0 3h2v2H0ZM1.500 5H3v7H1.500Z" /></svg>
        <Icon className="ml-[15px] size-[15px]"><path d="M1.500 14.500 9.500 3c1.500-2.500 4.500-.5 3 2L7 12.500M1.500 14.500l3-1c5-2 6-8 3.500-7.500S6.500 10 8.500 10s2.500 2 1 4c2 .5 3-2 5-1.500" /></Icon>
        <span className="ml-[14px] text-[10px]">ENG</span>
        <button className="ml-[10px] flex w-[56px] flex-col items-center text-[10px] leading-[15px]"><span>19:00</span><span>16/11/2022</span></button>
        <button aria-label="Notifications" className="mr-[20px] ml-[9px]"><Icon className="size-[16px]"><path d="M1.500 1.500h13v11H10l-2 2-2-2H1.500Z" /></Icon></button>
      </div>
    </footer>
  );
}

export default function App() {
  return (
    <div className="flex h-screen flex-col overflow-hidden bg-[#161616] font-['DejaVu_Sans_Condensed','DejaVu_Sans',sans-serif] text-[10px] leading-[15px]">
      <TitleBar />
      <TopBar />
      <div className="flex min-h-0 flex-1 gap-[2px]">
        <div className="flex min-w-0 flex-1 flex-col">
          <EditorHeader />
          <div className="flex min-h-0 flex-1"><Canvas /><Sidebar /></div>
        </div>
        <div className="flex w-[239px] shrink-0 flex-col gap-[4px]"><Outliner /><Properties /></div>
      </div>
      <StatusBar />
      <Taskbar />
    </div>
  );
}
